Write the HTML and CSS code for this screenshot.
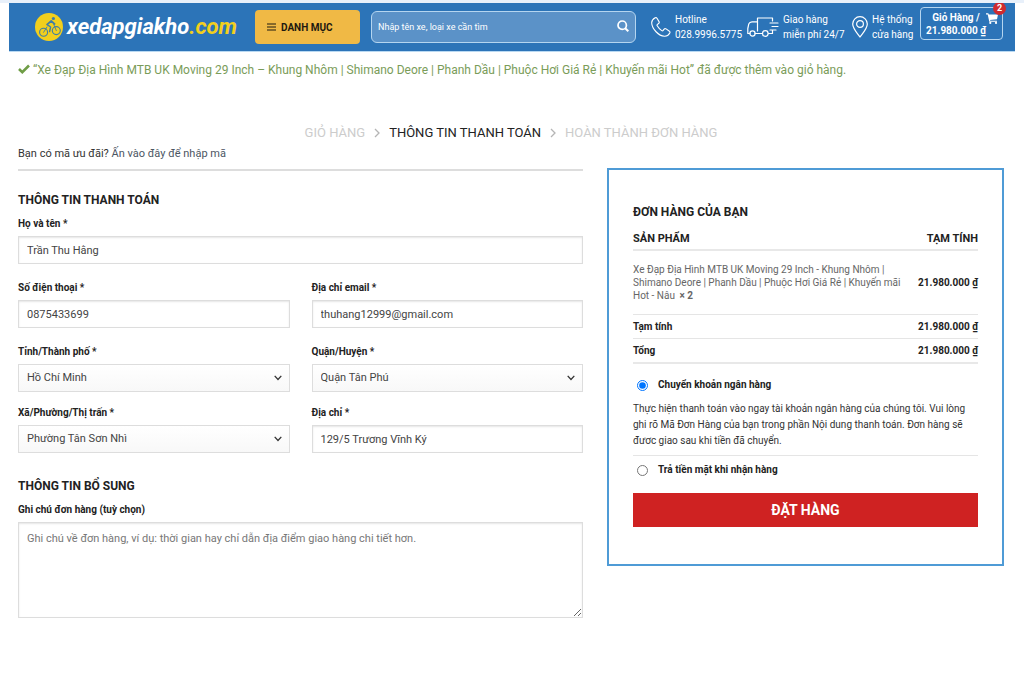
FILE: index.html
```html
<!DOCTYPE html>
<html lang="vi">
<head>
<meta charset="utf-8">
<meta name="viewport" content="width=device-width, initial-scale=1">
<title>Thông tin thanh toán - xedapgiakho.com</title>
<link rel="stylesheet" href="styles.css">
</head>
<body>
<header class="header">
  <a class="logo" href="#">
    <svg class="logo-mark" viewBox="0 0 28 28" aria-hidden="true">
      <circle cx="14" cy="14" r="14" fill="#f2cf1d"/>
      <g fill="none" stroke="#3f7da6" stroke-linecap="round" stroke-linejoin="round">
        <circle cx="8.600" cy="19.300" r="4" stroke-width="1.100"/>
        <circle cx="21.300" cy="17.600" r="4" stroke-width="1.100"/>
        <path d="M8.600 19.300 12 14M21.300 17.600 18.800 11.500" stroke-width="0.900"/>
        <path d="M12.200 11.400 16.200 8 19.600 11" stroke-width="1.700"/>
        <path d="M12.200 11.600 15.600 14 14.600 18.600" stroke-width="1.400"/>
      </g>
      <circle cx="18.400" cy="5.500" r="1.600" fill="#3f7da6"/>
    </svg>
    <span class="logo-text">xedapgiakho<span class="logo-tld">.com</span></span>
  </a>
  <button class="menu-button" type="button">
    <svg class="menu-icon" viewBox="0 0 9 8" aria-hidden="true"><path d="M0 1h9M0 4h9M0 7h9" stroke="currentColor" fill="none"/></svg>
    DANH MỤC
  </button>
  <form class="search">
    <input class="search-input" type="search" placeholder="Nhập tên xe, loại xe cần tìm" aria-label="Tìm kiếm">
    <button class="search-button" type="button" aria-label="Tìm">
      <svg viewBox="0 0 12 12" width="12" height="12" fill="none" stroke="currentColor" stroke-width="1.7" aria-hidden="true"><circle cx="5.2" cy="5.2" r="4.2"/><path d="M8.2 8.2 11.3 11.3" stroke-width="2"/></svg>
    </button>
  </form>
  <a class="contact phone" href="#">
    <svg viewBox="0 0 20 20" width="20" height="20" fill="none" stroke="currentColor" stroke-width="1.1" stroke-linejoin="round" aria-hidden="true"><path d="M4.2.8C2 2 .6 3.8.7 6c.3 5.900 7 13 12.800 13.300 2.300.1 4.200-1.100 5.300-3.200.4-.8.2-1.400-.4-1.900l-3.300-2.300c-.8-.5-1.500-.4-2 .3l-.9 1.200c-.4.5-.9.6-1.500.2-1.900-1.300-3.400-2.900-4.500-4.800-.3-.5-.2-1 .3-1.400l1.100-.9c.7-.5.8-1.200.4-1.900L6 1.300C5.500.5 4.900.4 4.200.8Z"/></svg>
    <span>Hotline<br>028.9996.5775</span>
  </a>
  <a class="contact delivery" href="#">
    <svg viewBox="0 0 32 20" width="32" height="20" fill="none" stroke="currentColor" stroke-width="1.200" stroke-linecap="round" stroke-linejoin="round" aria-hidden="true"><path d="M3 16.500H.8V11.500l1-4.600Q2.500 4.800 5 4.800H10.500V14M10.500 4.800V1H25.500V4M8 16.500H15M21.500 16.500H25.500V13M23 6H31M25 9.500H31M23 13H29"/><circle cx="5.500" cy="16.500" r="2.600"/><circle cx="18.300" cy="16.500" r="2.800"/></svg>
    <span>Giao hàng<br>miễn phí 24/7</span>
  </a>
  <a class="contact stores" href="#">
    <svg viewBox="0 0 16 22" width="16" height="22" fill="none" stroke="currentColor" stroke-width="1.200" aria-hidden="true"><path d="M8 21C5 17 .7 12.500.7 8a7.300 7.300 0 0 1 14.600 0C15.300 12.500 11 17 8 21Z"/><circle cx="8" cy="8" r="3.400"/></svg>
    <span>Hệ thống<br>cửa hàng</span>
  </a>
  <a class="cart" href="#">
    <span class="cart-text">Giỏ Hàng /<br>21.980.000 ₫</span>
    <svg class="cart-icon" viewBox="0 0 12 11" width="12" height="11" aria-hidden="true"><path d="M0 .3H2.300L2.800 1.500H12L11 6.300 4 7 4.300 7.800H11V8.800H3.300L1.700 1.400H0Z" fill="currentColor"/><circle cx="4.300" cy="9.900" r="1.100" fill="currentColor"/><circle cx="10" cy="9.900" r="1.100" fill="currentColor"/></svg>
    <span class="badge">2</span>
  </a>
</header>

<main class="page">
  <p class="notice">
    <svg viewBox="0 0 12 10" width="12" height="10" aria-hidden="true"><path d="M1 5 4.300 8.200 11 1.500" fill="none" stroke="#6f9d46" stroke-width="2.600"/></svg>
    “Xe Đạp Địa Hình MTB UK Moving 29 Inch – Khung Nhôm | Shimano Deore | Phanh Dầu | Phuộc Hơi Giá Rẻ | Khuyến mãi Hot” đã được thêm vào giỏ hàng.
  </p>

  <nav class="steps">
    <a href="#">GIỎ HÀNG</a>
    <svg class="chevron" viewBox="0 0 6 10" aria-hidden="true"><path d="M1 1 5 5 1 9"/></svg>
    <a class="current" href="#" aria-current="step">THÔNG TIN THANH TOÁN</a>
    <svg class="chevron" viewBox="0 0 6 10" aria-hidden="true"><path d="M1 1 5 5 1 9"/></svg>
    <a href="#">HOÀN THÀNH ĐƠN HÀNG</a>
  </nav>

  <form class="checkout">
    <section class="billing">
      <p class="coupon">Bạn có mã ưu đãi? <a href="#">Ấn vào đây để nhập mã</a></p>
      <h2 class="title">THÔNG TIN THANH TOÁN</h2>
      <div class="fields">
        <div class="field wide"><label for="name">Họ và tên *</label><input id="name" type="text" value="Trần Thu Hằng"></div>
        <div class="field"><label for="tel">Số điện thoại *</label><input id="tel" type="tel" value="0875433699"></div>
        <div class="field"><label for="email">Địa chỉ email *</label><input id="email" type="email" value="thuhang12999@gmail.com"></div>
        <div class="field"><label for="city">Tỉnh/Thành phố *</label><div class="select"><select id="city"><option>Hồ Chí Minh</option></select><svg viewBox="0 0 8 6" aria-hidden="true"><path d="M.7.900 4 4.500 7.300.900"/></svg></div></div>
        <div class="field"><label for="district">Quận/Huyện *</label><div class="select"><select id="district"><option>Quận Tân Phú</option></select><svg viewBox="0 0 8 6" aria-hidden="true"><path d="M.7.900 4 4.500 7.300.900"/></svg></div></div>
        <div class="field last"><label for="ward">Xã/Phường/Thị trấn *</label><div class="select"><select id="ward"><option>Phường Tân Sơn Nhì</option></select><svg viewBox="0 0 8 6" aria-hidden="true"><path d="M.7.900 4 4.500 7.300.900"/></svg></div></div>
        <div class="field last"><label for="address">Địa chỉ *</label><input id="address" type="text" value="129/5 Trương Vĩnh Ký"></div>
      </div>
      <h2 class="title">THÔNG TIN BỔ SUNG</h2>
      <div class="field"><label for="note">Ghi chú đơn hàng (tuỳ chọn)</label><textarea id="note" placeholder="Ghi chú về đơn hàng, ví dụ: thời gian hay chỉ dẫn địa điểm giao hàng chi tiết hơn."></textarea></div>
    </section>

    <section class="order">
      <h2 class="order-title">ĐƠN HÀNG CỦA BẠN</h2>
      <table class="summary">
        <thead><tr><th scope="col">SẢN PHẨM</th><th scope="col">TẠM TÍNH</th></tr></thead>
        <tbody><tr class="product"><td>Xe Đạp Địa Hình MTB UK Moving 29 Inch - Khung Nhôm | Shimano Deore | Phanh Dầu | Phuộc Hơi Giá Rẻ | Khuyến mãi Hot - Nâu <strong class="quantity">× 2</strong></td><td>21.980.000&nbsp;₫</td></tr></tbody>
        <tfoot>
          <tr><th scope="row">Tạm tính</th><td>21.980.000&nbsp;₫</td></tr>
          <tr><th scope="row">Tổng</th><td>21.980.000&nbsp;₫</td></tr>
        </tfoot>
      </table>
      <div class="payment">
        <div class="method"><input id="bank" type="radio" name="payment" checked><label for="bank">Chuyển khoản ngân hàng</label></div>
        <p class="method-info">Thực hiện thanh toán vào ngay tài khoản ngân hàng của chúng tôi. Vui lòng ghi rõ Mã Đơn Hàng của bạn trong phần Nội dung thanh toán. Đơn hàng sẽ đươc giao sau khi tiền đã chuyển.</p>
        <div class="method cod"><input id="cod" type="radio" name="payment"><label for="cod">Trả tiền mặt khi nhận hàng</label></div>
      </div>
      <button class="submit" type="button">ĐẶT HÀNG</button>
    </section>
  </form>
</main>
</body>
</html>
```
FILE: styles.css
```css
* {
  box-sizing: border-box;
}

body {
  margin: 0;
  border-top: 3px solid #e8f0fa;
  background: #fff;
  color: #333;
  font-family: Roboto, "Liberation Sans", sans-serif;
  font-size: 11px;
  line-height: 16px;
}

h2,
p {
  margin: 0;
}

a {
  color: inherit;
  text-decoration: none;
}

button,
input,
select,
textarea {
  margin: 0;
  font: inherit;
}

/* Header */
.header {
  display: flex;
  align-items: center;
  height: 49px;
  margin: 0 9px;
  padding: 0 12px 0 26px;
  border-bottom: 1px solid #b9d9f2;
  background: #2c74b8;
  color: #fff;
  font-size: 10px;
  line-height: 15px;
}

.logo {
  display: flex;
  flex: none;
  align-items: center;
  gap: 4px;
  width: 220px;
}

.logo-mark {
  width: 28px;
  height: 28px;
}

.logo-text {
  font-size: 22px;
  font-style: italic;
  font-weight: 700;
  line-height: 28px;
}

.logo-tld {
  color: #f2cf1d;
}

.menu-button {
  display: flex;
  flex: none;
  align-items: center;
  gap: 5px;
  width: 105px;
  height: 34px;
  padding: 0 12px;
  border: 0;
  border-radius: 4px;
  background: #f0b945;
  color: #1f1a10;
  font-weight: 700;
}

.menu-icon {
  width: 9px;
  height: 8px;
}

.search {
  display: flex;
  flex: 1;
  align-items: center;
  height: 32px;
  margin: 0 15px 0 11px;
  padding: 0 6px;
  border: 1px solid #b4d5f0;
  border-radius: 6px;
  background: #5b92c8;
  font-size: 9px;
}

.search-input {
  flex: 1;
  min-width: 0;
  padding: 0;
  border: 0;
  outline: 0;
  background: transparent;
  color: #fff;
}

.search-input::placeholder {
  color: #fff;
}

.search-button {
  display: flex;
  padding: 0 0 2px;
  border: 0;
  background: transparent;
  color: #fff;
}

.contact {
  display: flex;
  flex: none;
  align-items: center;
  gap: 4px;
  white-space: nowrap;
}

.phone {
  width: 96px;
}

.delivery {
  width: 105px;
}

.stores {
  width: 68px;
}

.cart {
  position: relative;
  display: flex;
  flex: none;
  justify-content: space-between;
  width: 83px;
  height: 33px;
  margin-bottom: 8px;
  padding: 3px 5px;
  border: 1px solid #b4d5f0;
  border-radius: 4px;
  font-weight: 700;
  line-height: 13px;
  text-align: center;
  white-space: nowrap;
}

.cart-icon {
  position: absolute;
  top: 5px;
  right: 4px;
}

.badge {
  position: absolute;
  top: -6px;
  right: -4px;
  width: 13px;
  height: 13px;
  border-radius: 50%;
  background: #cf2b2f;
  font-size: 9px;
}

/* Page */
.page {
  padding: 10px 20px 60px 18px;
}

.notice {
  color: #7a9c59;
  font-size: 12px;
  line-height: 17px;
}

.steps {
  display: flex;
  align-items: center;
  justify-content: center;
  gap: 9px;
  margin-top: 44px;
  color: #ccc;
  font-size: 13px;
  line-height: 20px;
}

.current {
  color: #222;
}

.chevron {
  width: 6px;
  height: 10px;
  fill: none;
  stroke: #b5b5b5;
  stroke-width: 1.3;
}

.checkout {
  display: grid;
  grid-template-columns: 565fr 397fr;
  align-items: start;
  gap: 24px;
  margin-top: 2px;
}

.coupon {
  padding-bottom: 6px;
  border-bottom: 2px solid #ddd;
  line-height: 18px;
}

.coupon a {
  color: #4c5663;
}

.title {
  margin-bottom: 6px;
  color: #222;
  font-size: 12px;
  font-weight: 700;
  line-height: 20px;
}

.coupon + .title {
  margin-top: 19px;
}

.fields {
  display: grid;
  grid-template-columns: 1fr 1fr;
  column-gap: 22px;
  margin-bottom: 23px;
}

.field {
  display: flex;
  flex-direction: column;
  gap: 4px;
  padding-bottom: 16px;
}

.wide {
  grid-column: 1 / -1;
}

.last {
  margin-top: -3px;
  padding-bottom: 0;
}

.field label {
  color: #222;
  font-size: 10px;
  font-weight: 700;
}

.field input,
.field select,
.field textarea {
  width: 100%;
  height: 28px;
  padding: 0 8px;
  border: 1px solid #ddd;
  border-radius: 0;
  outline: 0;
  background: #fff;
  box-shadow: inset 0 1px 2px rgba(0, 0, 0, 0.1);
  color: #444;
}

.select {
  display: grid;
  align-items: center;
}

.select select,
.select svg {
  grid-area: 1 / 1;
}

.field select {
  appearance: none;
  background: linear-gradient(#fff, #f8f8f8);
  box-shadow: none;
}

.select svg {
  justify-self: end;
  width: 8px;
  height: 6px;
  margin-right: 8px;
  fill: none;
  stroke: #333;
  stroke-width: 1.3;
  pointer-events: none;
}

.field textarea {
  height: 96px;
  padding: 8px;
  resize: vertical;
}

.field textarea::placeholder {
  color: #777;
}

/* Order summary */
.order {
  margin-top: 23px;
  padding: 32px 24px 37px;
  border: 2px solid #4f9bd6;
}

.order-title {
  margin-bottom: 7px;
  color: #222;
  font-size: 12px;
  font-weight: 700;
  line-height: 20px;
}

.summary {
  width: 100%;
  border-collapse: collapse;
  color: #222;
  font-size: 10px;
}

.summary th,
.summary td {
  padding: 4px 0 3px;
  border-bottom: 1px solid #e5e5e5;
  font-weight: 700;
  text-align: left;
}

.summary tr > :last-child {
  text-align: right;
  white-space: nowrap;
}

.summary thead th {
  padding: 2px 0;
  border-bottom: 2px solid #e8e8e8;
  font-size: 11px;
}

.summary .product td {
  padding: 12px 0;
  line-height: 13px;
}

.summary .product td:first-child {
  padding-right: 12px;
  color: #666;
  font-weight: 400;
}

.quantity {
  display: inline-block;
  margin-left: 2px;
}

.summary tfoot tr:last-child > * {
  border-bottom: 2px solid #e8e8e8;
}

.method {
  display: flex;
  align-items: center;
  gap: 10px;
  padding: 13px 0 8px 4px;
  color: #222;
  font-size: 10px;
  font-weight: 700;
}

.method input {
  width: 11px;
  height: 11px;
}

.method-info {
  padding-bottom: 6px;
  border-bottom: 1px solid #e5e5e5;
  font-size: 10px;
}

.cod {
  padding: 6px 0 15px 4px;
}

.submit {
  display: block;
  width: 100%;
  height: 34px;
  border: 0;
  background: #cf2222;
  color: #fff;
  font-size: 14px;
  font-weight: 700;
}
```
